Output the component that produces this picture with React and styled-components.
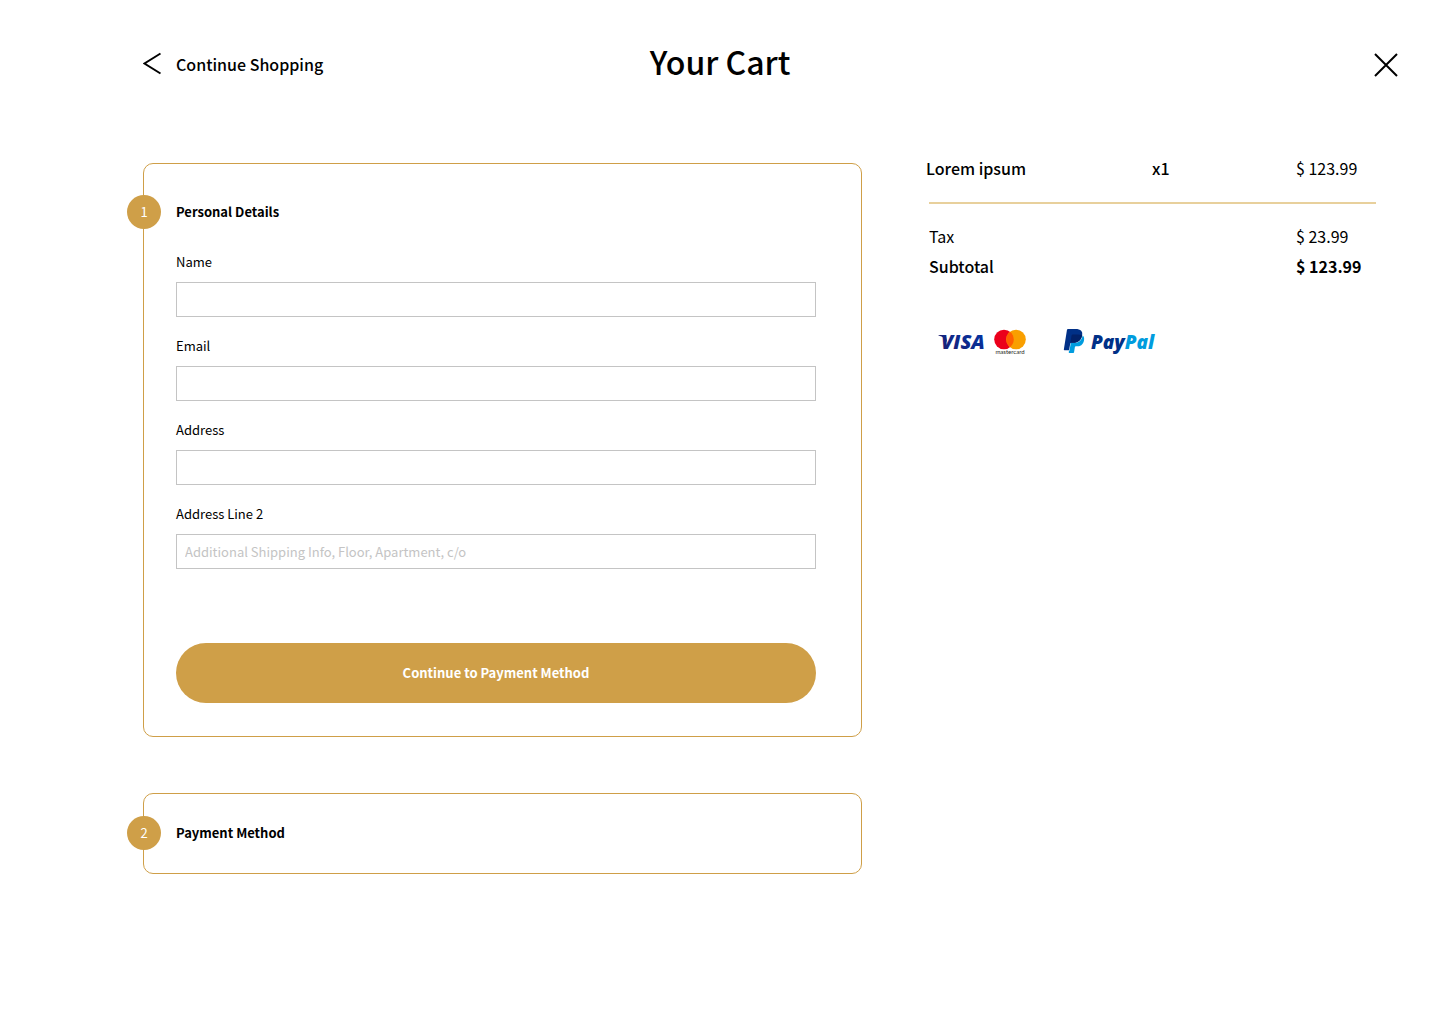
import React, { useState } from 'react';
import styled, { createGlobalStyle } from 'styled-components';

const colors = {
	gold: '#cf9f48',
	paleGold: '#e8d09c',
	border: '#c4c4c4',
	text: '#000'
};

const fields = [
	{ id: 'name', label: 'Name', type: 'text' },
	{ id: 'email', label: 'Email', type: 'email' },
	{ id: 'address', label: 'Address', type: 'text' },
	{
		id: 'address2',
		label: 'Address Line 2',
		type: 'text',
		placeholder: 'Additional Shipping Info, Floor, Apartment, c/o'
	}
];

const items = [ { name: 'Lorem ipsum', quantity: 1, price: 123.99 } ];

const totals = [
	{ label: 'Tax', amount: 23.99 },
	{ label: 'Subtotal', amount: 123.99, strong: true }
];

const GlobalStyle = createGlobalStyle`
	*, *::before, *::after {
		box-sizing: border-box;
	}

	body {
		margin: 0;
		background: #fff;
		color: ${colors.text};
		font-family: 'Noto Sans CJK SC', 'Noto Sans', sans-serif;
		font-size: 13px;
		line-height: 20px;
	}

	button, input {
		font: inherit;
	}
`;

const Page = styled.div`
	padding: 38px 0 64px;
`;

const Header = styled.header`
	display: grid;
	grid-template-columns: 1fr auto 1fr;
	align-items: center;
	padding: 0 42px;
`;

const BackLink = styled.a`
	display: flex;
	align-items: center;
	gap: 15px;
	margin-left: 101px;
	color: inherit;
	font-size: 16px;
	font-weight: 500;
	line-height: 24px;
	text-decoration: none;
`;

const Title = styled.h1`
	margin: 0;
	padding-bottom: 6px;
	font-size: 32px;
	font-weight: 500;
	line-height: 46px;
`;

const CloseButton = styled.button`
	display: flex;
	justify-self: end;
	padding: 2px 0 0;
	border: 0;
	background: none;
	cursor: pointer;
`;

const Main = styled.main`
	display: grid;
	grid-template-columns: minmax(0, 1fr) 450px;
	gap: 64px;
	align-items: start;
	padding: 63px 64px 0 143px;
`;

const Steps = styled.div`
	display: flex;
	flex-direction: column;
	gap: 56px;
	padding-top: 10px;
`;

const Card = styled.section`
	position: relative;
	padding: ${({ $open }) => ($open ? '31px 45px 33px 32px' : '22px 45px 23px 32px')};
	border: 1px solid ${colors.gold};
	border-radius: 10px;
`;

const CardTitle = styled.h2`
	display: flex;
	align-items: center;
	height: 34px;
	margin: 0;
	font-size: 13px;
	font-weight: 700;
`;

const Badge = styled.span`
	position: absolute;
	left: -17px;
	display: flex;
	align-items: center;
	justify-content: center;
	width: 34px;
	height: 34px;
	border-radius: 50%;
	background: ${colors.gold};
	color: #fff;
	font-weight: 400;
`;

const Form = styled.form`
	display: flex;
	flex-direction: column;
	gap: 19px;
	padding-top: 23px;
`;

const Field = styled.div`
	display: flex;
	flex-direction: column;
	gap: 10px;
`;

const Input = styled.input`
	width: 100%;
	height: 35px;
	padding: 0 8px;
	border: 1px solid ${colors.border};
	border-radius: 0;
	background: #fff;

	&::placeholder {
		color: ${colors.border};
		opacity: 1;
	}
`;

const SubmitButton = styled.button`
	height: 60px;
	margin-top: 55px;
	border: 0;
	border-radius: 30px;
	background: ${colors.gold};
	color: #fff;
	font-weight: 700;
	cursor: pointer;
`;

const Summary = styled.aside`
	font-size: 16px;
	line-height: 30px;
`;

const ItemList = styled.ul`
	margin: 0;
	padding: 0;
	list-style: none;
`;

const Item = styled.li`
	display: grid;
	grid-template-columns: 1fr 144px 80px;
`;

const ItemText = styled.span`
	font-weight: 500;
`;

const Totals = styled.dl`
	margin: 19px 0 0 3px;
	padding-top: 17px;
	border-top: 2px solid ${colors.paleGold};
`;

const TotalRow = styled.div`
	display: grid;
	grid-template-columns: 1fr 80px;

	dt {
		font-weight: ${({ $strong }) => ($strong ? 500 : 400)};
	}

	dd {
		margin: 0;
		font-weight: ${({ $strong }) => ($strong ? 700 : 400)};
	}
`;

const PaymentLogos = styled.div`
	display: flex;
	align-items: center;
	gap: 8px;
	padding: 47px 0 0 12px;
`;

const PayPalSlot = styled.span`
	display: flex;
	margin-left: 28px;
`;

const formatPrice = (value) => `$ ${value.toFixed(2)}`;

function BackIcon() {
	return (
		<svg width="18" height="24" viewBox="0 0 18 24" fill="none" aria-hidden="true">
			<path d="M17.5 1.5 1.5 11.5 17.5 21.5" stroke="#000" strokeWidth="2" />
		</svg>
	);
}

function CloseIcon() {
	return (
		<svg width="24" height="24" viewBox="0 0 24 24" fill="none" aria-hidden="true">
			<path d="M1 1 23 23M23 1 1 23" stroke="#000" strokeWidth="2" />
		</svg>
	);
}

function VisaLogo() {
	return (
		<svg width="48" height="28" viewBox="0 0 48 28" role="img" aria-label="Visa">
			<defs>
				<linearGradient id="visa" x1="0" y1="1" x2="1" y2="0">
					<stop offset="0" stopColor="#1c1c6c" />
					<stop offset="1" stopColor="#0038ac" />
				</linearGradient>
			</defs>
			<path d="M0.5 7H6.2C7.2 7 7.8 7.4 8 8.3L9.4 15.2C8 11.2 5 8.5 0.5 7.5Z" fill="#1c1c6c" />
			<text
				x="3"
				y="21"
				fill="url(#visa)"
				fontFamily="Open Sans, sans-serif"
				fontSize="20"
				fontStyle="italic"
				fontWeight="800"
			>
				VISA
			</text>
		</svg>
	);
}

function MastercardLogo() {
	return (
		<svg width="32" height="28" viewBox="0 0 32 28" role="img" aria-label="Mastercard">
			<circle cx="10" cy="11.5" r="9.8" fill="#eb001b" />
			<circle cx="22" cy="11.5" r="9.8" fill="#f99f00" />
			<path d="M16 3.8A9.8 9.8 0 0 1 16 19.2 9.8 9.8 0 0 1 16 3.8Z" fill="#ff5f00" />
			<text
				x="16"
				y="26"
				textAnchor="middle"
				fill="#231f20"
				fontFamily="Lato, sans-serif"
				fontSize="6"
				fontWeight="400"
			>
				mastercard
			</text>
		</svg>
	);
}

function PayPalLogo() {
	return (
		<svg width="96" height="28" viewBox="0 0 96 28" role="img" aria-label="PayPal">
			<g transform="translate(0 1)">
				<path
					d="M21.222 6.917a3.35 3.35 0 0 0-.607-.541c-.013.076-.026.175-.041.254-.93 4.778-4.005 7.201-9.138 7.201h-2.19a.563.563 0 0 0-.556.479l-1.187 7.527h-.506l-.24 1.516a.56.56 0 0 0 .554.647h3.882c.46 0 .85-.334.922-.788.06-.26.76-4.852.816-5.09a.932.932 0 0 1 .923-.788h.58c3.76 0 6.705-1.528 7.565-5.946.36-1.847.174-3.388-.777-4.471z"
					fill="#009cde"
				/>
				<path
					d="M7.1 21.3H2.47a.641.641 0 0 1-.633-.74L4.944.901C5.026.382 5.474 0 5.998 0h7.46c2.57 0 4.578.543 5.69 1.81 1.01 1.15 1.304 2.42 1.012 4.287-.023.143-.047.288-.077.437-.983 5.05-4.349 7.297-8.647 7.297h-2.19c-.524 0-.968.382-1.05.9z"
					fill="#003087"
				/>
				<path
					d="M20.1 6.1C18.9 5.6 17.4 5.4 15.7 5.4H10.7C10.1 5.4 9.7 5.8 9.6 6.3L8.2 14.9C8.3 14.3 8.7 13.8 9.2 13.8H11.4C15.7 13.8 19.1 11.6 20.1 6.5Z"
					fill="#012169"
				/>
			</g>
			<text
				x="29"
				y="21"
				fill="#003087"
				fontFamily="Open Sans, sans-serif"
				fontSize="19"
				fontStyle="italic"
				fontWeight="800"
			>
				Pay<tspan fill="#009cde">Pal</tspan>
			</text>
		</svg>
	);
}

function Step({ number, title, children }) {
	return (
		<Card $open={Boolean(children)}>
			<CardTitle>
				<Badge>{number}</Badge>
				{title}
			</CardTitle>
			{children}
		</Card>
	);
}

function PersonalDetailsForm() {
	const [ values, setValues ] = useState({});

	const handleChange = (e) => {
		setValues({ ...values, [e.target.name]: e.target.value });
	};

	return (
		<Form onSubmit={(e) => e.preventDefault()}>
			{fields.map(({ id, label, type, placeholder }) => (
				<Field key={id}>
					<label htmlFor={id}>{label}</label>
					<Input
						id={id}
						name={id}
						type={type}
						placeholder={placeholder}
						value={values[id] || ''}
						onChange={handleChange}
					/>
				</Field>
			))}
			<SubmitButton type="submit">Continue to Payment Method</SubmitButton>
		</Form>
	);
}

function OrderSummary() {
	return (
		<Summary>
			<ItemList>
				{items.map((item) => (
					<Item key={item.name}>
						<ItemText>{item.name}</ItemText>
						<ItemText>x{item.quantity}</ItemText>
						<span>{formatPrice(item.price)}</span>
					</Item>
				))}
			</ItemList>
			<Totals>
				{totals.map(({ label, amount, strong }) => (
					<TotalRow key={label} $strong={strong}>
						<dt>{label}</dt>
						<dd>{formatPrice(amount)}</dd>
					</TotalRow>
				))}
			</Totals>
			<PaymentLogos>
				<VisaLogo />
				<MastercardLogo />
				<PayPalSlot>
					<PayPalLogo />
				</PayPalSlot>
			</PaymentLogos>
		</Summary>
	);
}

function App() {
	return (
		<Page>
			<GlobalStyle />
			<Header>
				<BackLink href="#shop">
					<BackIcon />
					Continue Shopping
				</BackLink>
				<Title>Your Cart</Title>
				<CloseButton type="button" aria-label="Close cart">
					<CloseIcon />
				</CloseButton>
			</Header>
			<Main>
				<Steps>
					<Step number={1} title="Personal Details">
						<PersonalDetailsForm />
					</Step>
					<Step number={2} title="Payment Method" />
				</Steps>
				<OrderSummary />
			</Main>
		</Page>
	);
}

export default App;
